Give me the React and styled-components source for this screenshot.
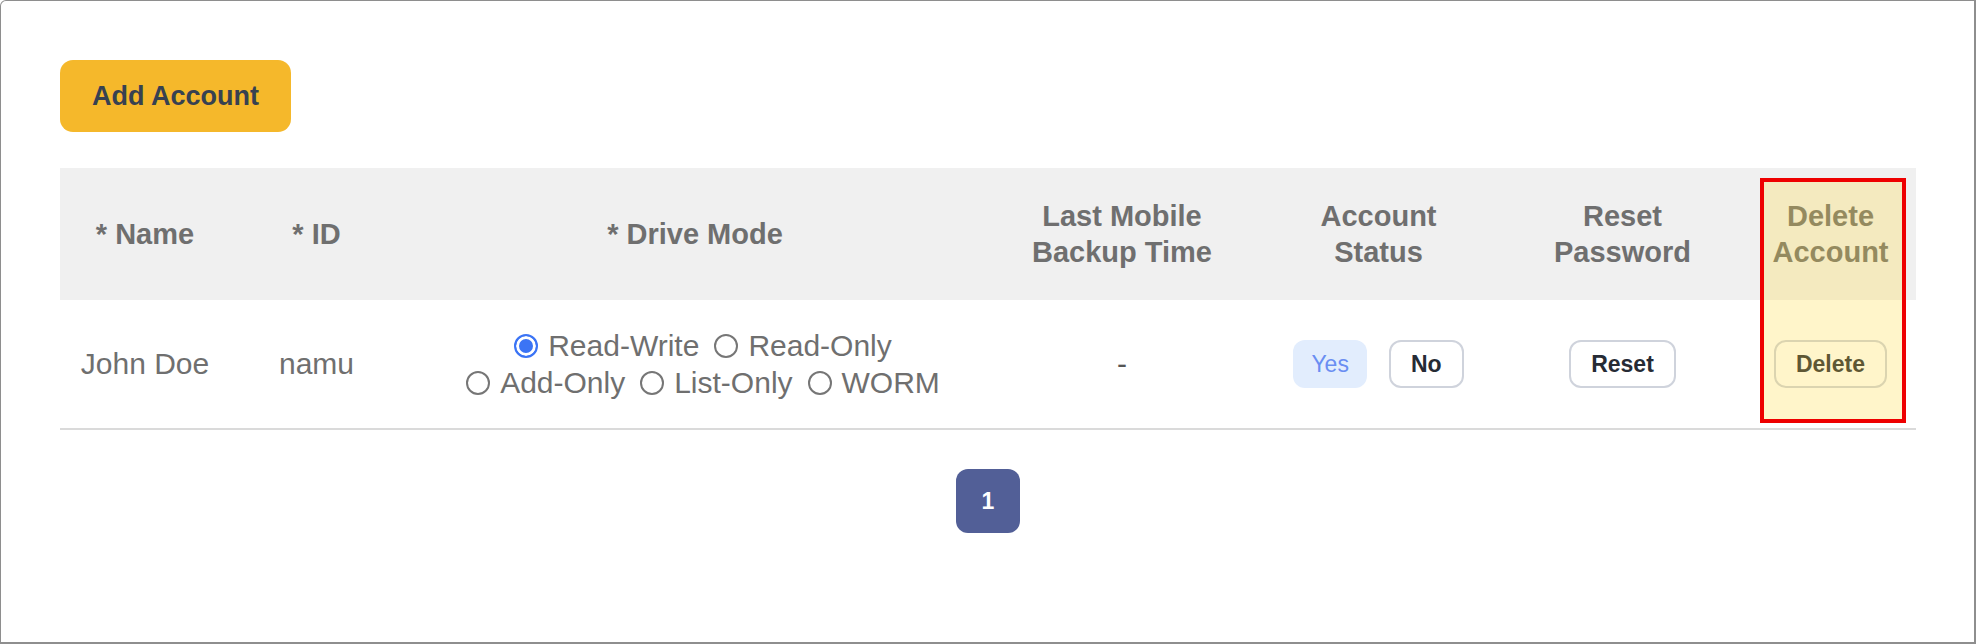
import * as React from "react";
import styled, { createGlobalStyle } from "styled-components";

const GlobalStyle = createGlobalStyle`
  html, body {
    margin: 0;
    padding: 0;
    background: #ffffff;
  }
  body {
    font-family: "Liberation Sans", Arial, sans-serif;
  }
`;

const Frame = styled.div`
  box-sizing: border-box;
  width: 1976px;
  height: 644px;
  border-style: solid;
  border-color: #8e8e8e;
  border-width: 1px 2px 2px 1px;
  border-top-left-radius: 6px;
  padding: 59px 58px 0 59px;
  background: #ffffff;
`;

const AddButton = styled.button`
  box-sizing: border-box;
  height: 72px;
  padding: 0 32px;
  border: none;
  border-radius: 13px;
  background: #f5b82b;
  color: #374151;
  font-family: "Liberation Sans", Arial, sans-serif;
  font-size: 27px;
  font-weight: 700;
  cursor: pointer;
`;

const TableWrap = styled.div`
  position: relative;
  margin-top: 36px;
`;

const COLUMNS = "170px 173px 584px 270px 243px 245px 171px";

const HeadRow = styled.div`
  display: grid;
  grid-template-columns: ${COLUMNS};
  height: 132px;
  background: #f0f0f0;
`;

const BodyRow = styled.div`
  display: grid;
  grid-template-columns: ${COLUMNS};
  height: 128px;
  border-bottom: 2px solid #dadada;
`;

const HeadCell = styled.div`
  display: flex;
  align-items: center;
  justify-content: center;
  text-align: center;
  color: #6f6f6f;
  font-size: 29px;
  font-weight: 700;
  line-height: 36px;
`;

const Cell = styled.div`
  display: flex;
  align-items: center;
  justify-content: center;
  text-align: center;
  color: ${(p) => p.$color || "#6f6f6f"};
  font-size: 30px;
  line-height: 36px;
  gap: ${(p) => p.$gap || 0}px;
`;

const RadioGroup = styled.div`
  display: flex;
  flex-wrap: wrap;
  justify-content: center;
  column-gap: 15px;
  max-width: 500px;
  padding-left: 16px;
`;

const RadioLabel = styled.label`
  display: inline-flex;
  align-items: center;
  gap: 10px;
  height: 37px;
  color: #6f6f6f;
  font-size: 30px;
  cursor: pointer;
`;

const Radio = styled.input.attrs({ type: "radio" })`
  appearance: none;
  box-sizing: border-box;
  width: 24px;
  height: 24px;
  margin: 0;
  border: 2px solid #767676;
  border-radius: 50%;
  background: #ffffff;

  &:checked {
    border-color: #3b74f5;
    background: #3b74f5;
    box-shadow: inset 0 0 0 3px #ffffff;
  }
`;

const PillButton = styled.button`
  box-sizing: border-box;
  height: 48px;
  padding: 0 ${(p) => (p.$soft ? 18 : 20)}px;
  border: ${(p) => (p.$soft ? "none" : "2px solid #cfd3dc")};
  border-radius: 12px;
  background: ${(p) => (p.$soft ? "#e2edfd" : "transparent")};
  color: ${(p) => (p.$soft ? "#6a8ef2" : "#262b35")};
  font-family: "Liberation Sans", Arial, sans-serif;
  font-size: 23px;
  font-weight: ${(p) => (p.$soft ? 400 : 700)};
  cursor: pointer;
`;

const Highlight = styled.div`
  position: absolute;
  top: 10px;
  right: 10px;
  width: 146px;
  height: 245px;
  box-sizing: border-box;
  border: 4px solid #ee0000;
  background: rgba(255, 218, 50, 0.26);
  pointer-events: none;
`;

const Pagination = styled.div`
  display: flex;
  justify-content: center;
  margin-top: 39px;
`;

const PageButton = styled.button`
  width: 64px;
  height: 64px;
  border: none;
  border-radius: 12px;
  background: #525f97;
  color: #ffffff;
  font-family: "Liberation Sans", Arial, sans-serif;
  font-size: 23px;
  font-weight: 700;
`;

const driveModes = ["Read-Write", "Read-Only", "Add-Only", "List-Only", "WORM"];

export default function App() {
  const [mode, setMode] = React.useState("Read-Write");
  const [active, setActive] = React.useState(true);

  return (
    <Frame>
      <GlobalStyle />
      <AddButton>Add Account</AddButton>

      <TableWrap>
        <HeadRow>
          <HeadCell>* Name</HeadCell>
          <HeadCell>* ID</HeadCell>
          <HeadCell>* Drive Mode</HeadCell>
          <HeadCell>
            Last Mobile
            <br />
            Backup Time
          </HeadCell>
          <HeadCell>
            Account
            <br />
            Status
          </HeadCell>
          <HeadCell>
            Reset
            <br />
            Password
          </HeadCell>
          <HeadCell>
            Delete
            <br />
            Account
          </HeadCell>
        </HeadRow>

        <BodyRow>
          <Cell>John Doe</Cell>
          <Cell>namu</Cell>
          <Cell>
            <RadioGroup>
              {driveModes.map((m) => (
                <RadioLabel key={m}>
                  <Radio
                    name="drive-mode"
                    checked={mode === m}
                    onChange={() => setMode(m)}
                  />
                  {m}
                </RadioLabel>
              ))}
            </RadioGroup>
          </Cell>
          <Cell $color="#555555">-</Cell>
          <Cell $gap={22}>
            <PillButton $soft={active} onClick={() => setActive(true)}>
              Yes
            </PillButton>
            <PillButton onClick={() => setActive(false)}>No</PillButton>
          </Cell>
          <Cell>
            <PillButton>Reset</PillButton>
          </Cell>
          <Cell>
            <PillButton>Delete</PillButton>
          </Cell>
        </BodyRow>

        <Highlight />
      </TableWrap>

      <Pagination>
        <PageButton>1</PageButton>
      </Pagination>
    </Frame>
  );
}
